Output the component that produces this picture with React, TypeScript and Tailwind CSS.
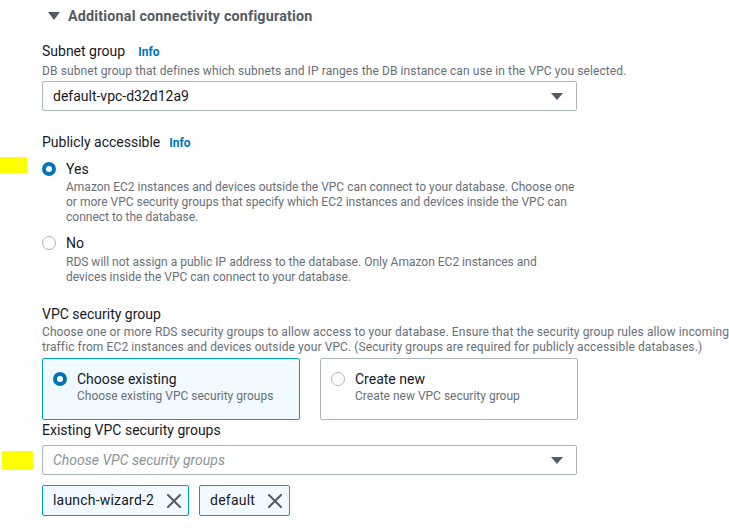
const Info = ({ gap }: { gap: string }) => (
  <span className={`${gap} text-[12px] font-bold text-[#0073bb]`}>Info</span>
);

const Caret = () => (
  <svg width="12" height="7" viewBox="0 0 12 7" className="shrink-0">
    <path d="M0 0h12L6 7z" fill="#545b64" />
  </svg>
);

const CloseIcon = () => (
  <svg width="14" height="14" viewBox="0 0 14 14" className="shrink-0">
    <path d="M1 1L13 13M13 1L1 13" stroke="#545b64" strokeWidth="2" strokeLinecap="square" />
  </svg>
);

const Radio = ({ checked }: { checked: boolean }) =>
  checked ? (
    <span className="box-border block h-[14px] w-[14px] shrink-0 rounded-full border-[4px] border-[#0073bb] bg-white" />
  ) : (
    <span className="box-border block h-[14px] w-[14px] shrink-0 rounded-full border border-[#aab7b8] bg-white" />
  );

const Select = ({ value, placeholder }: { value?: string; placeholder?: string }) => (
  <div className="flex h-[30px] w-[535px] items-center justify-between rounded-[2px] border border-[#aab7b8] bg-white pl-[10px] pr-[13px]">
    {value ? (
      <span className="text-[14px] text-[#16191f]">{value}</span>
    ) : (
      <span className="text-[14px] italic text-[#879596]">{placeholder}</span>
    )}
    <Caret />
  </div>
);

const Token = ({ label }: { label: string }) => (
  <div className="flex h-[31px] items-center gap-[13px] rounded-[2px] border border-[#00a1c9] bg-[#f1faff] pl-[10px] pr-[7px]">
    <span className="text-[14px] tracking-[0.2px] text-[#16191f]">{label}</span>
    <CloseIcon />
  </div>
);

// long help lines need a hair of tracking to match the widths, short ones don't
const desc = 'text-[12px] leading-[15px] text-[#687078]';
const descWide = 'text-[12px] leading-[15px] tracking-[0.1px] text-[#687078]';

const App = () => {
  return (
    <div
      className="relative h-[528px] w-[729px] overflow-hidden bg-white text-[#16191f]"
      style={{ fontFamily: 'Roboto, "Liberation Sans", sans-serif' }}
    >
      <div className="absolute left-0 top-[157px] h-[16px] w-[27px] bg-[#ffff00]" />
      <div className="absolute left-[2px] top-[451px] h-[19px] w-[31px] bg-[#ffff00]" />

      <div className="flex items-center gap-[8px] pl-[48px] pt-[6px] leading-[20px]">
        <svg width="12" height="8" viewBox="0 0 12 8">
          <path d="M0 0h12L6 8z" fill="#545b64" />
        </svg>
        <span className="text-[14.3px] font-bold tracking-[0.2px] text-[#545b64]">
          Additional connectivity configuration
        </span>
      </div>

      <div className="flex flex-col pl-[42px] pt-[15px]">
        <div className="h-[20px] text-[14px] leading-[20px]">
          Subnet group
          <Info gap="ml-[13px]" />
        </div>
        <div className={`mt-[3px] ${descWide}`}>
          DB subnet group that defines which subnets and IP ranges the DB instance can use in the VPC you selected.
        </div>
        <div className="mt-[2px]">
          <Select value="default-vpc-d32d12a9" />
        </div>

        <div className="mt-[21px] h-[20px] text-[14px] leading-[20px]">
          Publicly accessible
          <Info gap="ml-[9px]" />
        </div>
        <div className="mt-[7px] flex gap-[10px]">
          <div className="pt-[3px]">
            <Radio checked />
          </div>
          <div className="flex flex-col">
            <span className="text-[14px] leading-[20px]">Yes</span>
            <span className={`mt-[1px] ${desc}`}>
              Amazon EC2 instances and devices outside the VPC can connect to your database. Choose one
              <br />
              or more VPC security groups that specify which EC2 instances and devices inside the VPC can
              <br />
              connect to the database.
            </span>
          </div>
        </div>
        <div className="mt-[8px] flex gap-[10px]">
          <div className="pt-[3px]">
            <Radio checked={false} />
          </div>
          <div className="flex flex-col">
            <span className="text-[14px] leading-[20px]">No</span>
            <span className={`mt-[2px] ${desc}`}>
              RDS will not assign a public IP address to the database. Only Amazon EC2 instances and
              <br />
              devices inside the VPC can connect to your database.
            </span>
          </div>
        </div>

        <div className="mt-[19px] text-[14px] leading-[20px]">VPC security group</div>
        <div className={`mt-[1px] ${descWide}`}>
          Choose one or more RDS security groups to allow access to your database. Ensure that the security group rules
          allow incoming
          <br />
          traffic from EC2 instances and devices outside your VPC. (Security groups are required for publicly
          accessible databases.)
        </div>
        <div className="mt-[3px] flex gap-[20px]">
          <div className="flex h-[62px] w-[258px] gap-[10px] rounded-[2px] border border-[#00a1c9] bg-[#f1faff] pl-[10px] pt-[10px]">
            <div className="pt-[3px]">
              <Radio checked />
            </div>
            <div className="flex flex-col">
              <span className="text-[14px] leading-[20px]">Choose existing</span>
              <span className={desc}>Choose existing VPC security groups</span>
            </div>
          </div>
          <div className="flex h-[62px] w-[258px] gap-[10px] rounded-[2px] border border-[#aab7b8] bg-white pl-[10px] pt-[10px]">
            <div className="pt-[3px]">
              <Radio checked={false} />
            </div>
            <div className="flex flex-col">
              <span className="text-[14px] leading-[20px]">Create new</span>
              <span className={desc}>Create new VPC security group</span>
            </div>
          </div>
        </div>

        <div className="mt-[1px] text-[14px] leading-[18px]">Existing VPC security groups</div>
        <div className="mt-[6px]">
          <Select placeholder="Choose VPC security groups" />
        </div>
        <div className="mt-[10px] flex gap-[10px]">
          <Token label="launch-wizard-2" />
          <Token label="default" />
        </div>
      </div>
    </div>
  );
};

export default App;
